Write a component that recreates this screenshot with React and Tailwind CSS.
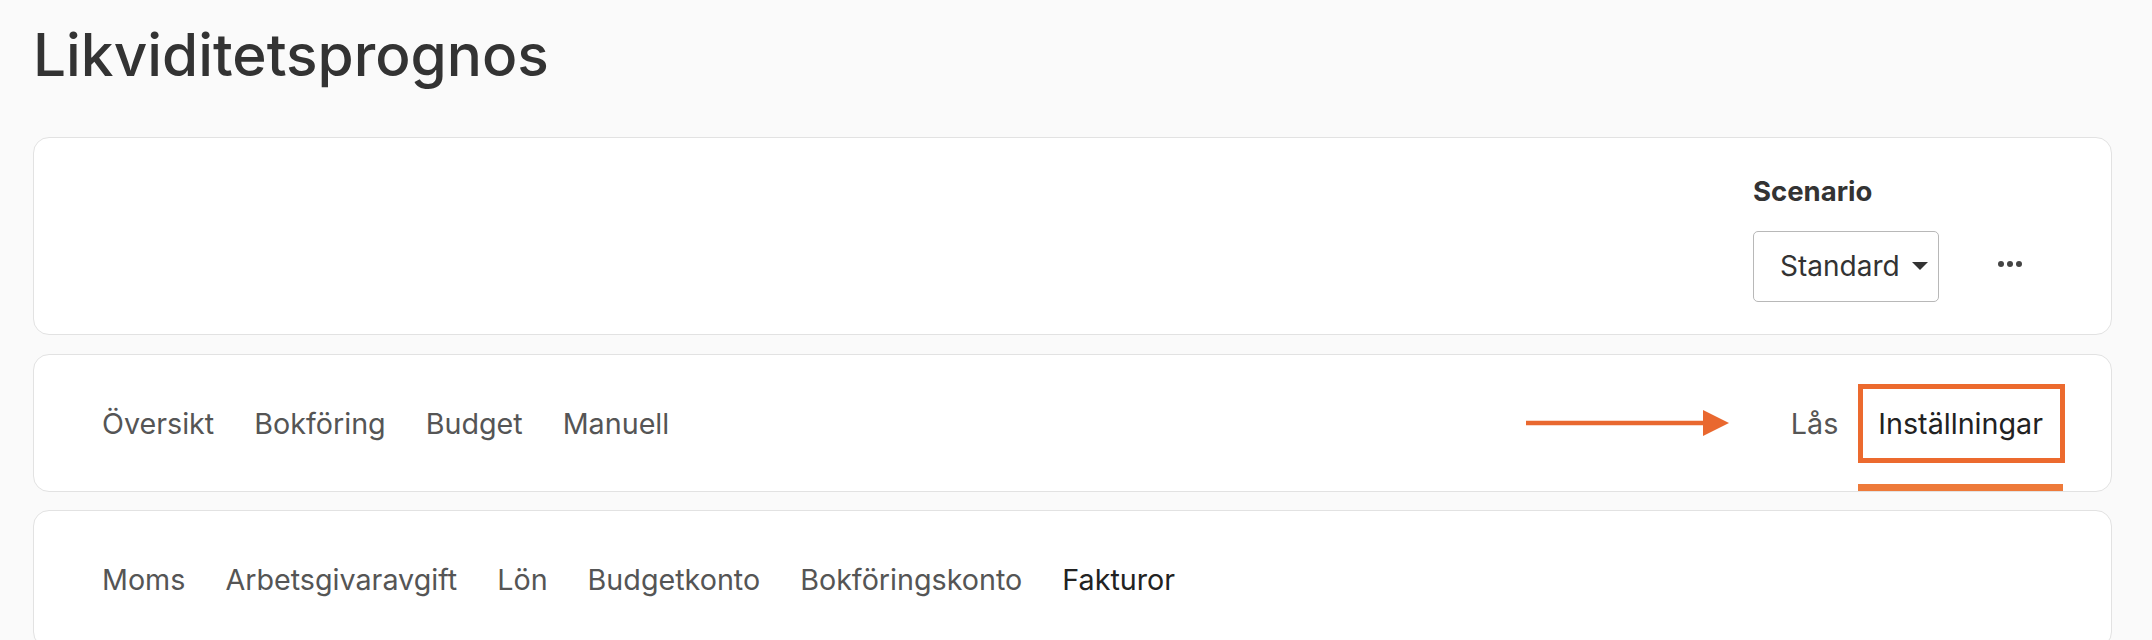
import React, { useState } from 'react';

const mainTabs = ['Översikt', 'Bokföring', 'Budget', 'Manuell'];
const subTabs = ['Moms', 'Arbetsgivaravgift', 'Lön', 'Budgetkonto', 'Bokföringskonto', 'Fakturor'];

function Tab({ label, active, onClick }) {
  return (
    <button
      onClick={onClick}
      className={`relative h-full flex items-center px-[20px] text-[28.7px] ${active ? 'text-[#222222]' : 'text-[#555555]'}`}
    >
      {label}
      {active && <span className="absolute left-0 right-0 bottom-0 h-[7px] bg-[#ee7a3a]" />}
    </button>
  );
}

export default function App() {
  const [mainTab, setMainTab] = useState('Inställningar');
  const [subTab, setSubTab] = useState('Fakturor');

  return (
    <div className="min-h-[640px] bg-[#fafafa] pl-[33px] pr-[40px] font-['Inter',sans-serif]">
      <h1 className="pt-[20px] mb-[47px] text-[58.5px] leading-[1.2] font-medium text-[#333333]">
        Likviditetsprognos
      </h1>

      <div className="h-[198px] bg-white border border-[#e2e2e2] rounded-[16px] flex items-center justify-end pr-[59px]">
        <div className="flex flex-col">
          <span className="text-[27.5px] font-bold text-[#333333] mb-[19px]">Scenario</span>
          <button className="w-[186px] h-[71px] border-[1.5px] border-[#b8b8b8] rounded-[5px] flex items-center pl-[26px] text-[28px] text-[#333333]">
            Standard
            <svg className="ml-auto mr-[10px]" width="16" height="8" viewBox="0 0 16 8">
              <path d="M0 0 L16 0 L8 8 Z" fill="#333333" />
            </svg>
          </button>
        </div>
        <button className="ml-[29px] mt-[56px] w-[84px] h-[60px] flex items-center justify-center">
          <svg width="24" height="6" viewBox="0 0 24 6">
            <circle cx="3" cy="3" r="3" fill="#444444" />
            <circle cx="12" cy="3" r="3" fill="#444444" />
            <circle cx="21" cy="3" r="3" fill="#444444" />
          </svg>
        </button>
      </div>

      <div className="mt-[19px] h-[138px] bg-white border border-[#e2e2e2] rounded-[16px] flex items-stretch px-[48px]">
        {mainTabs.map((t) => (
          <Tab key={t} label={t} active={mainTab === t} onClick={() => setMainTab(t)} />
        ))}
        <div className="ml-auto flex items-stretch">
          <div className="flex items-center mr-[42px]">
            <svg width="203" height="26" viewBox="0 0 203 26">
              <line x1="0" y1="13" x2="180" y2="13" stroke="#e9682f" strokeWidth="4.5" />
              <path d="M177 0 L203 13 L177 26 Z" fill="#e9682f" />
            </svg>
          </div>
          <Tab label="Lås" active={mainTab === 'Lås'} onClick={() => setMainTab('Lås')} />
          <div className="relative">
            <Tab label="Inställningar" active={mainTab === 'Inställningar'} onClick={() => setMainTab('Inställningar')} />
            <span className="absolute left-0 right-[-2px] top-[29px] h-[79px] border-[5px] border-[#ec6a2e] pointer-events-none" />
          </div>
        </div>
      </div>

      <div className="mt-[18px] h-[138px] bg-white border border-[#e2e2e2] rounded-[16px] flex items-stretch px-[48px]">
        {subTabs.map((t) => (
          <button
            key={t}
            onClick={() => setSubTab(t)}
            className={`h-full flex items-center px-[20px] text-[28.7px] ${subTab === t ? 'text-[#222222]' : 'text-[#555555]'}`}
          >
            {t}
          </button>
        ))}
      </div>
    </div>
  );
}
